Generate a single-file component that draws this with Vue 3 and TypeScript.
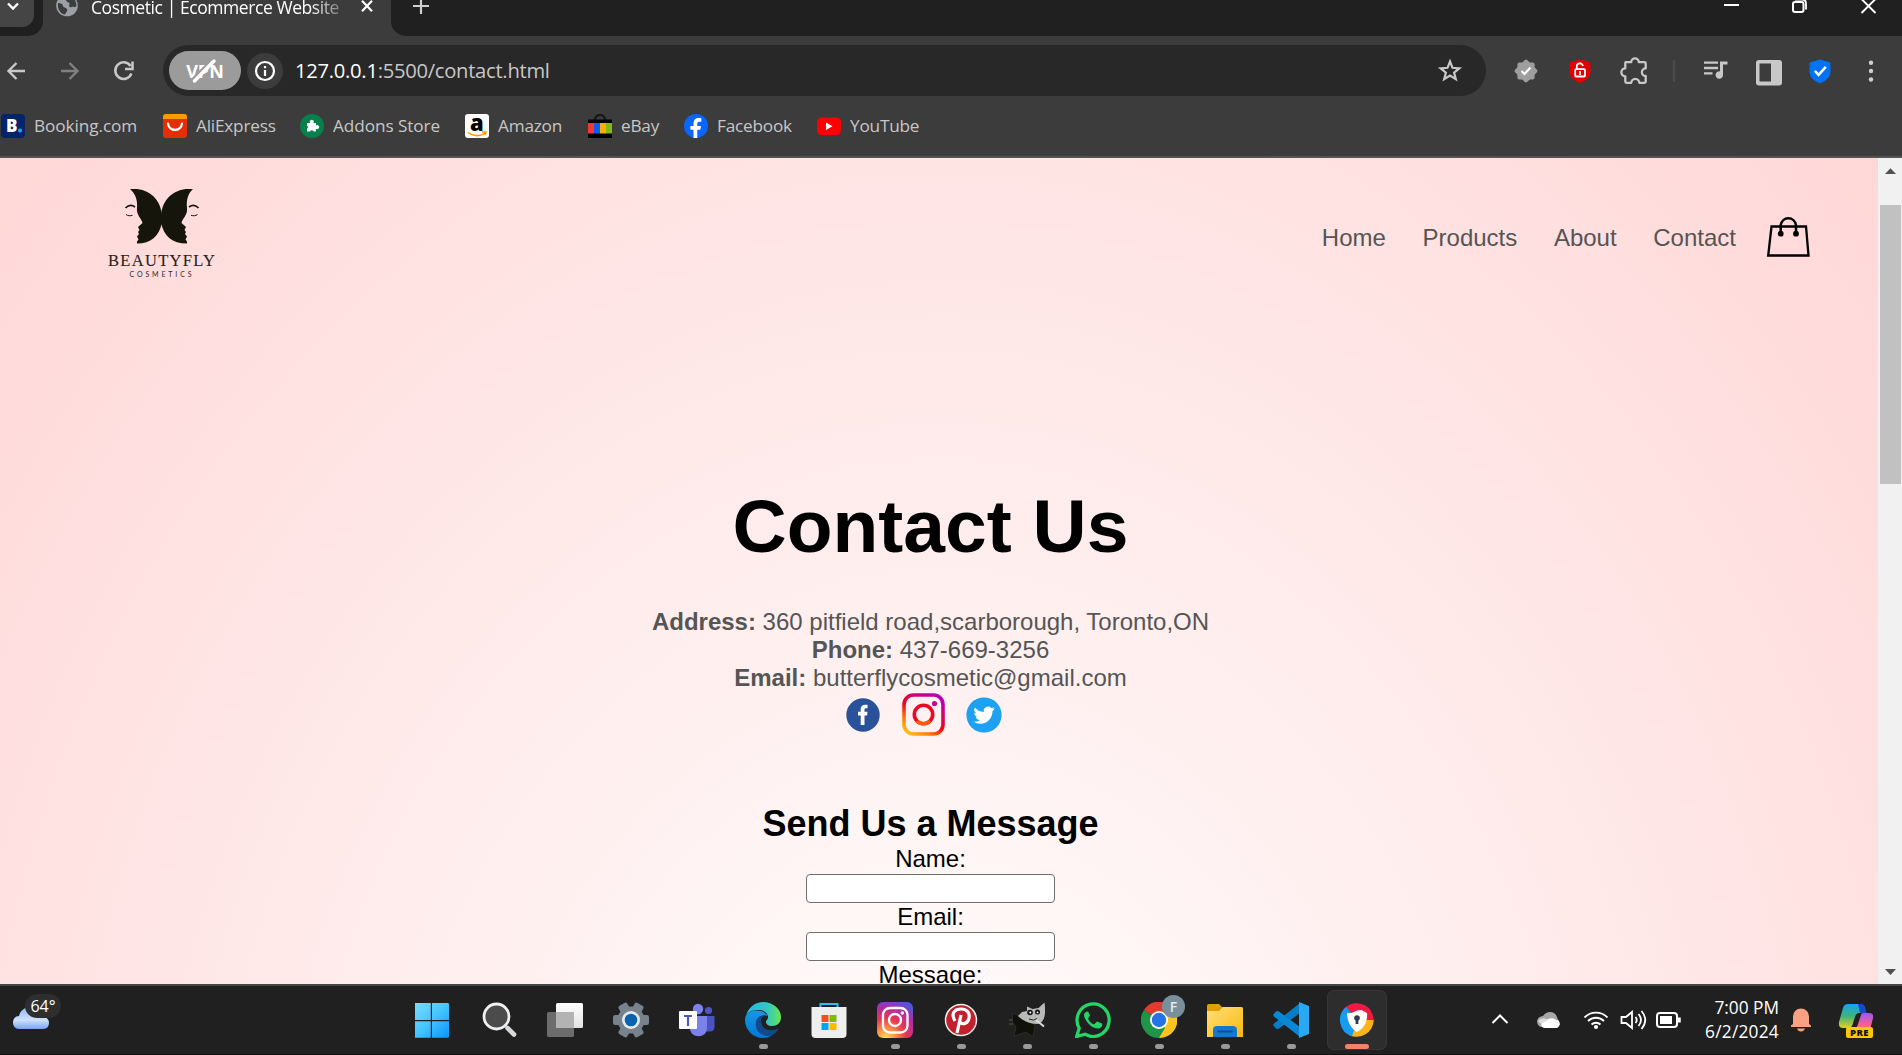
<script setup lang="ts">
interface Bookmark {
  id: string
  label: string
  width: number
}

interface TaskItem {
  id: string
  running?: boolean
  active?: boolean
}

const bookmarks: Bookmark[] = [
  { id: 'booking', label: 'Booking.com', width: 104 },
  { id: 'aliexpress', label: 'AliExpress', width: 79 },
  { id: 'addons', label: 'Addons Store', width: 107 },
  { id: 'amazon', label: 'Amazon', width: 65 },
  { id: 'ebay', label: 'eBay', width: 38 },
  { id: 'facebook', label: 'Facebook', width: 75 },
  { id: 'youtube', label: 'YouTube', width: 69 },
]

const links: string[] = ['Home', 'Products', 'About', 'Contact']

const tasks: TaskItem[] = [
  { id: 'start' },
  { id: 'search' },
  { id: 'taskview' },
  { id: 'settings' },
  { id: 'teams' },
  { id: 'edge', running: true },
  { id: 'store' },
  { id: 'instagram', running: true },
  { id: 'pinterest', running: true },
  { id: 'gimp', running: true },
  { id: 'whatsapp', running: true },
  { id: 'chrome', running: true },
  { id: 'explorer', running: true },
  { id: 'vscode', running: true },
  { id: 'secure', running: true, active: true },
]
</script>

<template>
  <div class="screen">
    <header class="browser">
      <div class="tabstrip">
        <div class="strip-left">
          <div class="tab-search">
            <svg width="34" height="27" viewBox="0 0 34 27"><path d="M8 3.500l5 5 5-5" fill="none" stroke="#fff" stroke-width="2.400" /></svg>
          </div>
        </div>
        <div class="tab">
          <svg class="globe" width="22" height="18" viewBox="0 0 22 18">
            <circle cx="11" cy="5.500" r="10.800" fill="#9aa0a6" />
            <path d="M2 3c3 0 5 1 5 3s3 1 4 3-1 3-2 5.500C5 14 2 10 2 6zM10 0h9c1 2 1.500 4 1.500 6-2 2-3 0-5 1s-3-1-2-3-3-1-3.500-4z" fill="#3c3c3c" />
          </svg>
          <span class="tab-title">Cosmetic | Ecommerce Website</span>
          <svg class="tab-close" width="14" height="14" viewBox="0 0 14 14"><path d="M2 .8l10 10.400M12 .8L2 11.200" stroke="#fff" stroke-width="2.200" /></svg>
        </div>
        <div class="strip-right">
          <svg class="new-tab" width="16" height="16" viewBox="0 0 16 16"><path d="M0 6h16M8-2v16" stroke="#cfcfcf" stroke-width="2.200" /></svg>
          <div class="window-buttons">
            <svg width="68" height="20" viewBox="0 0 68 20"><path d="M26 5h15" stroke="#fff" stroke-width="2" /></svg>
            <svg width="68" height="20" viewBox="0 0 68 20"><rect x="27" y="2" width="10.500" height="10" rx="2" fill="none" stroke="#fff" stroke-width="2" /><path d="M29-.5h7q4 0 4 4v6" fill="none" stroke="#fff" stroke-width="1.800" /></svg>
            <svg width="68" height="20" viewBox="0 0 68 20"><path d="M27.500-1l14 14M41.500-1l-14 14" stroke="#fff" stroke-width="1.900" /></svg>
          </div>
        </div>
      </div>

      <div class="toolbar">
        <div class="nav-buttons">
          <svg width="54" height="24" viewBox="0 0 54 24"><path d="M25 12H9M16.500 4L8.500 12l8 8" fill="none" stroke="#c8c8c8" stroke-width="2.400" /></svg>
          <svg width="54" height="24" viewBox="0 0 54 24"><path d="M7 12h16M15.500 4l8 8-8 8" fill="none" stroke="#808080" stroke-width="2.400" /></svg>
          <svg width="54" height="24" viewBox="0 0 54 24"><path d="M23.400 14.500A8.300 8.300 0 1 1 22.500 7M24.500 2.500V10H17" fill="none" stroke="#c8c8c8" stroke-width="2.500" /></svg>
        </div>
        <div class="omnibox">
          <div class="vpn">
            <span>VPN</span>
            <svg width="72" height="39" viewBox="0 0 72 39"><path d="M24 28L44 8" stroke="#9b9b9b" stroke-width="3" /><path d="M25.500 30L45 10" stroke="#fff" stroke-width="3.500" stroke-linecap="round" /></svg>
          </div>
          <div class="info">
            <svg width="22" height="22" viewBox="0 0 22 22"><circle cx="11" cy="11" r="9" fill="none" stroke="#fff" stroke-width="2.200" /><path d="M11 10v6M11 6v2.300" stroke="#fff" stroke-width="2.200" /></svg>
          </div>
          <span class="url"><b>127.0.0.1</b>:5500/contact.html</span>
          <svg class="star" width="26" height="26" viewBox="0 0 26 26"><path d="M13 3.500l2.500 6.300 6.800.5-5.200 4.300 1.700 6.600L13 17.600l-5.800 3.600 1.700-6.600-5.200-4.300 6.800-.5z" fill="none" stroke="#c8c8c8" stroke-width="2.200" /></svg>
        </div>
        <div class="extensions">
          <svg width="54" height="30" viewBox="0 0 54 30">
            <g fill="#9e9e9e"><rect x="18.400" y="6.400" width="17.200" height="17.200" rx="2" /><rect x="18.400" y="6.400" width="17.200" height="17.200" rx="2" transform="rotate(45 27 15)" /></g>
            <path d="M22.500 15l3 3 6-6.500" fill="none" stroke="#fff" stroke-width="2.200" />
          </svg>
          <svg width="54" height="30" viewBox="0 0 54 30">
            <path d="M27 3.500l10.500 3v9c0 6-5 9.500-10.500 11.500C21.500 25 16.500 21.500 16.500 15.500v-9z" fill="#e30000" />
            <rect x="22.200" y="13.200" width="9.800" height="7.300" rx="1" fill="none" stroke="#fff" stroke-width="1.800" />
            <path d="M23.800 13v-2a3.100 3.100 0 0 1 6.200-1M27 15v4" fill="none" stroke="#fff" stroke-width="1.700" />
          </svg>
          <svg width="54" height="30" viewBox="0 0 54 30">
            <path d="M18.500 6.200h5.700a3.800 3.800 0 0 1 7.600 0h5.700q1.200 0 1.200 1.200v5a3.800 3.800 0 0 0 0 7.600v5.600q0 1.200-1.200 1.200h-5.200a4 4 0 0 0-8 0h-4.800q-1.200 0-1.200-1.200v-5.300a3.800 3.800 0 0 1 0-7.900V7.400q0-1.200.2-1.200z" fill="none" stroke="#c8c8c8" stroke-width="2.300" stroke-linejoin="round" />
          </svg>
          <svg width="28" height="30" viewBox="0 0 28 30"><path d="M13 4v22" stroke="#4a4a4a" stroke-width="2.500" /></svg>
          <svg width="54" height="30" viewBox="0 0 54 30">
            <path d="M15 6.700h14M15 12h14M15 17.300h8.500" stroke="#c8c8c8" stroke-width="2.300" />
            <path d="M31 5.500h7.500v3H34V19a3.700 3.700 0 1 1-3-3.600z" fill="#c8c8c8" />
          </svg>
          <svg width="53" height="30" viewBox="0 0 53 30"><rect x="13" y="4" width="26" height="25.500" rx="3" fill="#c8c8c8" /><rect x="16.500" y="7.500" width="11.500" height="18" fill="#3c3c3c" /></svg>
          <svg width="50" height="30" viewBox="0 0 50 30"><path d="M24 3.500l10.500 3v9c0 6-5 9.500-10.500 12C18.500 25 13.500 21.500 13.500 15.500v-9z" fill="#0073f5" /><path d="M18.800 14.800l3.800 4 7.200-8" fill="none" stroke="#fff" stroke-width="2.500" /></svg>
          <svg width="50" height="30" viewBox="0 0 50 30" fill="#d0d0d0"><circle cx="25" cy="6.700" r="2.200" /><circle cx="25" cy="15" r="2.200" /><circle cx="25" cy="23.500" r="2.200" /></svg>
        </div>
      </div>

      <div class="bookmarks">
        <div v-for="item in bookmarks" :key="item.id" class="bookmark">
          <svg width="24" height="24" viewBox="0 0 24 24">
            <g v-if="item.id === 'booking'">
              <rect width="24" height="24" rx="4" fill="#04246a" />
              <text x="5" y="18" font-size="17" font-weight="800" font-family="Open Sans, sans-serif" fill="#fff">B</text>
              <circle cx="19" cy="16.500" r="2" fill="#2aa5e8" />
            </g>
            <g v-else-if="item.id === 'aliexpress'">
              <rect width="24" height="24" rx="3" fill="#e62e04" /><path d="M0 5V3q0-3 3-3h18q3 0 3 3v2z" fill="#ff9a00" />
              <path d="M5 9.500c1 8.500 13 8.500 14 0" fill="none" stroke="#fff" stroke-width="2.200" stroke-linecap="round" />
            </g>
            <g v-else-if="item.id === 'addons'">
              <circle cx="12" cy="12" r="12" fill="#08804c" />
              <path d="M7 9h3.200a2 2 0 1 1 3.200 0H16v2.600a2 2 0 1 1 0 3.200V17.500h-2.400a1.900 1.900 0 0 0-3.600 0H7v-2.800a1.800 1.800 0 0 0 0-3.200z" fill="#fff" />
            </g>
            <g v-else-if="item.id === 'amazon'">
              <rect width="24" height="24" rx="3" fill="#fff" />
              <text x="5" y="16.800" font-size="22" font-weight="800" font-family="Open Sans, sans-serif" fill="#000">a</text>
              <path d="M3 18.500c5 4 12 4 17 .8M17 18h4l-1 3" fill="none" stroke="#ff9900" stroke-width="1.600" />
            </g>
            <g v-else-if="item.id === 'ebay'">
              <path d="M6.500 7a5.500 6 0 0 1 11 0" fill="none" stroke="#151515" stroke-width="2.200" />
              <path d="M0 5.500h24V24H0z" fill="#000" />
              <path d="M0 9h6v10.500H0z" fill="#ff3434" /><path d="M6 9h6v10.500H6z" fill="#0a5df0" /><path d="M12 9h6v10.500h-6z" fill="#ffae00" /><path d="M18 9h6v10.500h-6z" fill="#84b817" />
            </g>
            <g v-else-if="item.id === 'facebook'">
              <circle cx="12" cy="12" r="12" fill="#0866ff" />
              <path d="M9.500 24v-8.200H6.400V12h3.100v-2.200c0-4 1.800-5.800 5.500-5.800.8 0 1.800.1 2.300.3v3.400h-1.700c-1.700 0-2.300.6-2.300 2.300v2h3.700l-.7 3.800h-3V24z" fill="#fff" />
            </g>
            <g v-else>
              <rect y="3.500" width="24" height="17.500" rx="4.500" fill="#f00" /><path d="M9 8.500l6.500 3.700L9 16z" fill="#fff" />
            </g>
          </svg>
          <span :class="item.id" :style="{ width: item.width + 'px' }">{{ item.label }}</span>
        </div>
      </div>
    </header>

    <div class="viewport">
      <main class="page">
        <nav class="navbar">
          <svg class="logo" width="120" height="120" viewBox="0 0 120 120">
            <g fill="#15150c">
              <path d="M30 11.300C47 9 61 20 62 38V45C59 58 51 65.500 37 65.500L37 63.500 38.500 61.500 37 58.500 39 56 38 54 39.500 52 38 49 42.500 45C42 41 36 37 37 30 38 21 34 14 30 11.300z" />
              <path d="M93 11.300C76 9 62 20 61 38V45C64 58 72 65.500 87 65.500L87 63.500 85.500 61.500 87 58.500 85 56 86 54 84.500 52 86 49 81.500 45C82 41 88 37 87 30 86 21 89 14 93 11.300z" />
            </g>
            <path d="M25.500 30c3-3 6-3.500 9.500-1M98.500 30c-3-3-6-3.500-9.500-1" fill="none" stroke="#15150c" stroke-width="1.700" />
            <path d="M26 36.500c2 1.500 4 1.500 6.500.8M97.500 36.500c-2 1.500-4 1.500-6.500.8" fill="none" stroke="#15150c" />
            <text x="8" y="88" font-family="Liberation Serif, serif" font-size="16.500" textLength="107" fill="#26231b" stroke="#26231b" stroke-width=".1">BEAUTYFLY</text>
            <text x="29.500" y="99.300" font-family="Lato, sans-serif" font-size="7" textLength="62" fill="#2d2922">COSMETICS</text>
          </svg>
          <ul>
            <li v-for="link in links" :key="link"><a>{{ link }}</a></li>
          </ul>
          <svg class="bag" width="45" height="45" viewBox="0 0 45 45">
            <path d="M5.500 13.500H40L42.500 42.500H2.200z" fill="none" stroke="#000" stroke-width="2.300" />
            <path d="M14.700 20V12a7.800 8.500 0 0 1 15.300 0v8" fill="none" stroke="#000" stroke-width="2.500" />
            <circle cx="14.700" cy="20.700" r="2.900" /><circle cx="30" cy="20.700" r="2.900" />
          </svg>
        </nav>

        <section class="contact">
          <h1>Contact Us</h1>
          <p><strong>Address:</strong> 360 pitfield road,scarborough, Toronto,ON</p>
          <p><strong>Phone:</strong> 437-669-3256</p>
          <p><strong>Email:</strong> butterflycosmetic@gmail.com</p>
          <div class="social">
            <svg width="34" height="34" viewBox="0 0 34 34"><circle cx="17" cy="17" r="16.700" fill="#29529b" /><path d="M14.700 27V17.600H12V13.800h2.700v-2.500c0-3 1.600-4.600 4.400-4.600h2.400v3.600h-1.700c-1.100 0-1.300.5-1.300 1.500v2h3l-.4 3.800h-2.600V27z" fill="#fff" /></svg>
            <svg width="43" height="43" viewBox="0 0 43 43">
              <defs>
                <linearGradient id="ig" x1=".1" y1="1" x2=".75" y2="0"><stop offset="0" stop-color="#ffc414" /><stop offset=".25" stop-color="#ff7a0a" /><stop offset=".5" stop-color="#f3001c" /><stop offset="1" stop-color="#b900b4" /></linearGradient>
              </defs>
              <rect x="2" y="2" width="39" height="39" rx="9.500" fill="none" stroke="url(#ig)" stroke-width="3.600" />
              <circle cx="21.500" cy="21.500" r="9.200" fill="none" stroke="#ee0825" stroke-width="3.600" /><circle cx="32.500" cy="10.500" r="2.600" fill="#c80083" />
              <path d="M15 28a9.200 9.200 0 0 0 13 0" fill="none" stroke="#ff5a0a" stroke-width="3.600" />
            </svg>
            <svg width="36" height="36" viewBox="0 0 36 36"><circle cx="18" cy="18" r="17.600" fill="#1da1f2" /><path transform="translate(7.500 7.600) scale(.88)" d="M23.950 4.570a10 10 0 0 1-2.820.78 4.960 4.960 0 0 0 2.160-2.730c-.95.560-2 .960-3.130 1.190a4.920 4.920 0 0 0-8.380 4.480C7.690 8.100 4.070 6.130 1.640 3.160a4.920 4.920 0 0 0 1.520 6.570 4.900 4.900 0 0 1-2.230-.61v.06a4.920 4.920 0 0 0 3.950 4.830 5 5 0 0 1-2.210.08 4.940 4.940 0 0 0 4.600 3.420A9.870 9.870 0 0 1 0 19.540a13.990 13.990 0 0 0 7.550 2.210c9.050 0 14-7.500 14-13.980 0-.21 0-.42-.02-.63a9.940 9.940 0 0 0 2.460-2.550z" fill="#fff" /></svg>
          </div>
        </section>

        <form class="message" @submit.prevent>
          <h2>Send Us a Message</h2>
          <label for="name">Name:</label>
          <input id="name" type="text" />
          <label for="email">Email:</label>
          <input id="email" type="email" />
          <label>Message:</label>
        </form>
      </main>
      <div class="scrollbar">
        <svg width="24" height="47" viewBox="0 0 24 47"><path d="M7 16l5.500-5.800L18 16z" fill="#505050" /></svg>
        <div class="thumb"></div>
        <svg class="down" width="24" height="24" viewBox="0 0 24 24"><path d="M7 9h11l-5.500 6z" fill="#505050" /></svg>
      </div>
    </div>

    <footer class="taskbar">
      <div class="weather">
        <svg width="38" height="24" viewBox="0 0 38 24">
          <defs><linearGradient id="cloud" x2="0" y2="1"><stop offset="0" stop-color="#8db6f5" /><stop offset=".6" stop-color="#cfe0fa" /><stop offset="1" stop-color="#79a5ef" /></linearGradient></defs>
          <path d="M7 9C8 4 12 0 19 0c9 0 11 6 11 10h1c8 0 8 12 0 12H7C-1 22-1 9 7 9z" fill="url(#cloud)" />
        </svg>
        <span>64°</span>
      </div>

      <div class="tasks">
        <div v-for="task in tasks" :key="task.id" class="task" :class="{ running: task.running, active: task.active }">
          <svg width="36" height="36" viewBox="0 0 36 36">
            <g v-if="task.id === 'start'" transform="translate(-1.700 0)">
              <defs><linearGradient id="win" x2="1" y2="1"><stop offset="0" stop-color="#7bdcff" /><stop offset=".5" stop-color="#45c5fd" /><stop offset="1" stop-color="#0a93fb" /></linearGradient></defs>
              <path d="M2 1h15.500v17H.7V2.200Q.7 1 2 1zM18.700 1h15.600q1.400 0 1.400 1.300V18h-17zM.7 19.200h16.800v16.500H2Q.7 35.700.7 34.500zM18.700 19.200h17v15.300q0 1.200-1.400 1.200H18.700z" fill="url(#win)" />
            </g>
            <g v-else-if="task.id === 'search'" transform="translate(1.500 0)">
              <path d="M25 26l6.500 6.500" stroke="#d5d9dc" stroke-width="4.600" stroke-linecap="round" />
              <circle cx="14" cy="14.500" r="12.500" fill="#4b4b4b" stroke="#eef0f1" stroke-width="2.800" />
            </g>
            <g v-else-if="task.id === 'taskview'">
              <defs><linearGradient id="tv" x2="0" y2="1"><stop offset="0" stop-color="#fff" /><stop offset="1" stop-color="#e2e2e2" /></linearGradient></defs>
              <rect x="9" y="1" width="27" height="25" rx="1.500" fill="url(#tv)" />
              <rect x="0" y="10" width="27" height="25" rx="1.500" fill="#6c6c6c" /><rect x="9" y="10" width="18" height="16" fill="#b3b3b3" />
            </g>
            <g v-else-if="task.id === 'settings'">
              <g fill="#77828c">
                <circle cx="18" cy="18" r="13.500" />
                <rect v-for="angle in [30, 90, 150, 210, 270, 330]" :key="angle" x="13" y="0" width="10" height="12" rx="2.200" :transform="`rotate(${angle} 18 18)`" />
              </g>
              <circle cx="18" cy="18" r="9" fill="#e6e9ec" /><circle cx="18" cy="18" r="6.300" fill="#0a62b0" />
            </g>
            <g v-else-if="task.id === 'teams'">
              <circle cx="29.500" cy="8.500" r="3.600" fill="#4f57c8" /><path d="M25 14h10.500v11q0 4.500-5 4.500H25z" fill="#4a52c4" />
              <circle cx="19" cy="7" r="5.200" fill="#7b83eb" /><path d="M11 14h17v12c0 11-17 11-17 0z" fill="#7b83eb" />
              <rect x="0" y="9" width="18" height="18" rx="1" fill="#fff" />
              <path d="M5 14h8M9 14v10" stroke="#4e56c0" stroke-width="2.200" />
            </g>
            <g v-else-if="task.id === 'edge'">
              <defs>
                <linearGradient id="edge-a" x2="1"><stop offset="0" stop-color="#29b5ee" /><stop offset=".6" stop-color="#30c5c5" /><stop offset="1" stop-color="#69e84e" /></linearGradient>
                <linearGradient id="edge-b" x2="0" y2="1"><stop offset="0" stop-color="#1798df" /><stop offset="1" stop-color="#0078d8" /></linearGradient>
              </defs>
              <path d="M1 13C5 3 12 0 18 0c10 0 18 7 18 15 0 6-4 9-9 9-4 0-6-2-6-4s2-2 2-5c0-4-4-7-9-7S4 9 1 13z" fill="url(#edge-a)" />
              <path d="M0 18c0-7 6-9.500 12-9.500S22 12 22.500 14c-5-2-9 1-9.500 6-.5 8 7 13 15 12-3 3-7 4-10 4C8 36 0 28 0 18z" fill="url(#edge-b)" />
              <path d="M17 13.500c-5 1-7 5-6 11C12 31 18 34 24 34c5-1 8-4 10-8-9 5-18 1-18-7 0-3 1-4 3-5z" fill="#114a8c" />
            </g>
            <g v-else-if="task.id === 'store'">
              <path d="M9.500 6V2h17v4" fill="none" stroke="#33bbf2" stroke-width="2" />
              <path d="M.5 5h35v27q0 4-4 4h-27q-4 0-4-4z" fill="#eeeeee" />
              <path d="M10.500 13h7v7h-7z" fill="#f25022" /><path d="M18.500 13h7v7h-7z" fill="#7fba00" /><path d="M10.500 21h7v7h-7z" fill="#00a4ef" /><path d="M18.500 21h7v7h-7z" fill="#ffb900" />
            </g>
            <g v-else-if="task.id === 'instagram'">
              <defs>
                <radialGradient id="insta" cx=".25" cy="1" r="1.100"><stop offset="0" stop-color="#ffdc62" /><stop offset=".22" stop-color="#fb9a45" /><stop offset=".5" stop-color="#e8374f" /><stop offset=".78" stop-color="#b12ca9" /><stop offset="1" stop-color="#5355d8" /></radialGradient>
              </defs>
              <rect width="36" height="36" rx="6" fill="url(#insta)" />
              <g fill="none" stroke="#fff" stroke-width="2.300"><rect x="6" y="6" width="24.500" height="24.500" rx="7" /><circle cx="18" cy="18" r="6" /></g><circle cx="25.300" cy="11" r="1.700" fill="#fff" />
            </g>
            <g v-else-if="task.id === 'pinterest'">
              <circle cx="18" cy="18" r="15.500" fill="#c1202c" stroke="#eef0ee" stroke-width="1.500" />
              <path d="M12 19c-5-9 1-12 6-12 7 0 9 5 8 9-1 6-7 7-9 4M18 13l-4 18" fill="none" stroke="#fff" stroke-width="3.200" />
            </g>
            <g v-else-if="task.id === 'gimp'">
              <path d="M4 11l12 6 10 6-2 12-7-5-12 4 2-9-4-6z" fill="#10110b" stroke="#343529" stroke-width=".7" />
              <path d="M35.500.500C37 12 36 21 28 22 20 22 13 18 9 14l4-4 5-1V4.500L23.500 7l6-1z" fill="#b8bab8" />
              <circle cx="21" cy="10.500" r="2.800" fill="#151515" /><circle cx="28.500" cy="10" r="2.500" fill="#151515" /><circle cx="21.300" cy="10.500" r="1" fill="#fff" /><circle cx="28.500" cy="10.300" r=".9" fill="#fff" />
              <path d="M20 17q5 2.500 8-.5" stroke="#222" fill="none" /><path d="M27 18l8 6.500" stroke="#ddd" stroke-width="2" /><path d="M0 18h4M0 22h4" stroke="#555" />
            </g>
            <g v-else-if="task.id === 'whatsapp'">
              <path d="M1.700 34.500l2.500-8.300A16 16.300 0 1 1 10 32.200z" fill="none" stroke="#25d366" stroke-width="3.300" />
              <path d="M13 9.500c-4 0-5 4-3 7 3 6 8 10 13 10 3 0 5-3 4-5l-5-2-3 3c-3-1-5-4-6-6l2-3z" fill="#25d366" />
            </g>
            <g v-else-if="task.id === 'chrome'">
              <path d="M18 18L3 8A18 18 0 0 1 34.500 10z" fill="#e33b2e" /><path d="M18 18l16.500-8A18 18 0 0 1 18 36z" fill="#fcc31e" /><path d="M18 18l6 8-6 10A18 18 0 0 1 3 8z" fill="#209447" />
              <circle cx="18" cy="18" r="9" fill="#fff" /><circle cx="18" cy="18" r="7.200" fill="#2673e8" />
            </g>
            <g v-else-if="task.id === 'explorer'">
              <defs><linearGradient id="folder" x2="1" y2="1"><stop offset="0" stop-color="#ffe07a" /><stop offset="1" stop-color="#fbb80e" /></linearGradient></defs>
              <path d="M0 4q0-2 2-2h10l3 3h19q2 0 2 2v8H0z" fill="#dfa000" /><path d="M0 9h12l4-4h18q2 0 2 2v28H0z" fill="url(#folder)" />
              <path d="M6 35v-7q0-4 4-4h16q4 0 4 4v7z" fill="#1479ca" /><path d="M11 29.500h14" stroke="#07509a" stroke-width="1.800" stroke-linecap="round" />
            </g>
            <g v-else-if="task.id === 'vscode'">
              <path d="M27 1v10L6 26.500q-1.500 1-3 0L.7 24q-1-1.200.3-2.500z" fill="#087cc5" /><path d="M27 35V25L6 9.500q-1.500-1-3 0L.7 12q-1 1.200.3 2.500z" fill="#0a88d4" /><path d="M26 0l10 4v28l-10 4z" fill="#29a9f3" />
            </g>
            <g v-else>
              <path d="M18 18L4 8A17 17 0 0 1 32 9z" fill="#ef1945" /><path d="M18 18L8 5A17 17 0 0 1 34.700 18L30 28z" fill="#ef1b45" /><path d="M18 18h16.700A17 17 0 0 1 10 33z" fill="#fbb51a" /><path d="M18 18l-5 16.200A17 17 0 0 1 7 5z" fill="#159df5" />
              <path d="M8 11c6 1 9-3 13-3 3 0 4 2 7 3 1 8-3 16-10 19C12 27 8 19 8 11z" fill="#fff" />
              <circle cx="18" cy="16" r="2.800" fill="#303b4d" /><path d="M18 17v5" stroke="#303b4d" stroke-width="2.800" />
            </g>
          </svg>
          <span v-if="task.id === 'chrome'" class="profile">F</span>
        </div>
      </div>

      <div class="tray">
        <svg width="36" height="24" viewBox="0 0 36 24"><path d="M10.500 15l7.500-7.500 7.500 7.500" fill="none" stroke="#fff" stroke-width="2" /></svg>
        <svg class="onedrive" width="36" height="24" viewBox="0 0 36 24"><path d="M11 19c-5-1-6-10 2-11C17 2 25 3 27 9l3 8z" fill="#a7a7a7" /><path d="M15 20c-5 0-5-6 0-7 3-3 8-4 11-1 5-1 5 8 0 8z" fill="#fff" /><path d="M8 13q4-5 10-1l-7 4z" fill="#dcdcdc" /></svg>
        <svg width="60" height="24" viewBox="0 0 60 24"><g fill="none" stroke="#fff" stroke-width="1.900"><path d="M18.500 9.500a16 16 0 0 1 23 0M22 13a11.500 11.500 0 0 1 16 0M25.500 16.500a6.500 6.500 0 0 1 9 0" /></g><circle cx="30" cy="19" r="2.100" fill="#fff" /></svg>
        <svg class="volume" width="36" height="24" viewBox="0 0 36 24"><g transform="translate(14 0)" fill="none" stroke="#fff" stroke-width="1.800"><path d="M-6.500 9H-2L4 4v16l-6-5h-4.500zM7.500 9q2.500 3 0 6M10.500 6q5 6 0 12M13.500 3q7.500 9 0 18" /></g></svg>
        <svg width="36" height="24" viewBox="0 0 36 24"><rect x="7" y="5" width="20" height="14" rx="3" fill="none" stroke="#fff" stroke-width="2" /><rect x="10" y="8" width="12" height="8" fill="#fff" /><path d="M29 9.500v5" stroke="#fff" stroke-width="3.500" /></svg>
        <div class="clock"><span>7:00 PM</span><span class="date">6/2/2024</span></div>
        <svg class="bell" width="22" height="24" viewBox="0 0 22 24"><path d="M1 17.500l2-1.500V8.500a8 8 0 0 1 16 0V16l2 1.500V19H1zM7 20.500h8q-1 3-4 3t-4-3z" fill="#fba183" /></svg>
        <div class="copilot">
          <svg width="36" height="32" viewBox="0 0 36 32">
            <defs>
              <linearGradient id="cp-a" x2="0" y2="1"><stop offset="0" stop-color="#17a4ef" /><stop offset=".5" stop-color="#3bb37e" /><stop offset="1" stop-color="#eacd22" /></linearGradient>
              <linearGradient id="cp-b" x2="0" y2="1"><stop offset="0" stop-color="#9859f2" /><stop offset=".6" stop-color="#f05e9f" /><stop offset="1" stop-color="#fa7756" /></linearGradient>
            </defs>
            <path d="M10 0h12q4 0 5 4l1 5h-7q-3 0-4 4l-3 9q-1 2-4 2H5q-5 0-4-6L5 4q1-4 5-4z" fill="url(#cp-a)" />
            <path d="M20 0h3q3 0 4 4l1.500 5H22z" fill="#1549c5" />
            <path d="M25 9h6q5 0 4 5l-3 12H10l4-2h2q3 0 4-4l3-9q0-2 2-2z" fill="url(#cp-b)" />
          </svg>
          <span>PRE</span>
        </div>
      </div>
    </footer>
  </div>
</template>

<style>
body {
  margin: 0;
  overflow: hidden;
}
</style>

<style scoped>
.screen {
  display: flex;
  flex-direction: column;
  width: 1902px;
  height: 1055px;
  overflow: hidden;
  font-family: "Open Sans", "Noto Sans", sans-serif;
}
svg {
  display: block;
  flex: none;
}
span {
  white-space: nowrap;
}

.browser {
  box-sizing: border-box;
  height: 158px;
  background: #3c3c3c;
  border-bottom: 2px solid #545454;
}
.tabstrip {
  display: flex;
  height: 36px;
}
.strip-left {
  width: 43px;
  background: #202020;
  border-bottom-right-radius: 15px;
}
.tab-search {
  width: 34px;
  height: 27px;
  background: #454545;
  border-bottom-right-radius: 12px;
}
.tab {
  display: flex;
  align-items: flex-start;
  width: 348px;
}
.globe {
  margin-left: 13px;
}
.tab-title {
  width: 250px;
  margin: -6px 0 0 13px;
  font-size: 17.5px;
  line-height: 27px;
  letter-spacing: -0.43px;
  color: #fff;
  mask-image: linear-gradient(90deg, #000 218px, rgba(0, 0, 0, 0.3) 250px);
}
.tab-close {
  margin-left: 19px;
}
.strip-right {
  display: flex;
  flex: 1;
  justify-content: space-between;
  background: #202020;
  border-bottom-left-radius: 15px;
}
.new-tab {
  margin-left: 22px;
}
.window-buttons {
  display: flex;
}

.toolbar {
  display: flex;
  height: 51px;
  padding-top: 9px;
}
.nav-buttons {
  display: flex;
  align-items: center;
  width: 163px;
}
.omnibox {
  display: flex;
  align-items: center;
  width: 1323px;
  background: #282828;
  border-radius: 26px;
}
.vpn {
  position: relative;
  width: 72px;
  height: 39px;
  margin-left: 6px;
  background: #9b9b9b;
  border-radius: 20px;
}
.vpn span {
  display: block;
  font-size: 18px;
  font-weight: 700;
  line-height: 40px;
  color: #fff;
  text-align: center;
}
.vpn svg {
  position: absolute;
  top: 0;
  left: 0;
}
.info {
  display: grid;
  place-items: center;
  width: 36px;
  height: 36px;
  margin-left: 6px;
  background: #3c3c3c;
  border-radius: 50%;
}
.url {
  margin: -1px 0 0 12px;
  font-size: 20.2px;
  letter-spacing: -0.28px;
  color: #c7c7c7;
}
.url b {
  font-weight: 400;
  color: #fff;
}
.star {
  margin: 0 23px 0 auto;
}
.extensions {
  display: flex;
  align-items: center;
  padding-left: 12.5px;
}

.bookmarks {
  display: flex;
  gap: 25px;
  align-items: center;
  height: 60px;
  padding-left: 1px;
}
.bookmark {
  display: flex;
  gap: 9px;
  align-items: center;
}
.bookmark span {
  font-size: 17.2px;
  line-height: 24px;
  letter-spacing: -0.2px;
  color: #c7c7c7;
}
.bookmark .booking,
.bookmark .addons {
  letter-spacing: -0.08px;
}

.viewport {
  display: flex;
  height: 826px;
  overflow: hidden;
}
.page {
  width: 1878px;
  font-family: "Liberation Sans", Arial, sans-serif;
  font-size: 24px;
  line-height: 28px;
  color: #000;
  background: radial-gradient(#fff, #ffd6d6) 0 -68px / 100% 2303px no-repeat;
}
.navbar {
  display: flex;
  align-items: center;
  height: 160px;
  padding: 0 67px 0 100px;
}
.navbar ul {
  display: flex;
  gap: 36.67px;
  padding: 0;
  margin: 0 30px 0 auto;
  list-style: none;
}
.navbar a,
.contact p {
  color: #555;
}
.bag {
  margin-top: -5px;
}
.contact,
.message {
  display: flex;
  flex-direction: column;
  align-items: center;
  padding-right: 17px;
}
h1 {
  margin: 165px 0 39px;
  font-size: 75px;
  line-height: 86px;
}
.contact p {
  margin: 0;
}
.social {
  display: flex;
  gap: 21.5px;
  align-items: center;
  height: 45px;
  padding-right: 13px;
}
.message {
  margin-top: 66px;
}
h2 {
  margin: 0;
  font-size: 36px;
  line-height: 42px;
}
label {
  height: 29px;
}
input {
  box-sizing: border-box;
  width: 249px;
  height: 29px;
  padding: 0;
  background: #fff;
  border: 1px solid #6f6f6f;
  border-radius: 4px;
}

.scrollbar {
  display: flex;
  flex-direction: column;
  width: 24px;
  background: #f1f1f1;
}
.thumb {
  width: 21px;
  height: 279px;
  margin-left: 2px;
  background: #c1c1c1;
}
.down {
  margin-top: auto;
}

.taskbar {
  box-sizing: border-box;
  display: flex;
  height: 71px;
  background: #202020;
  border-top: 2px solid #454545;
  border-bottom: 1px solid #111;
}
.weather {
  position: relative;
  width: 400px;
}
.weather svg {
  margin: 21px 0 0 12px;
}
.weather span {
  position: absolute;
  top: 8px;
  left: 25px;
  width: 36px;
  height: 24px;
  font-size: 16px;
  line-height: 24px;
  color: #fff;
  text-align: center;
  background: #2e2e2e;
  border-radius: 12px;
}
.tasks {
  display: flex;
}
.task {
  position: relative;
  box-sizing: border-box;
  width: 60px;
  height: 60px;
  padding: 12px 12px 0;
  margin: 4px 3px 0;
}
.task.active {
  background: #2d2d2d;
  border-radius: 7px;
  box-shadow: inset 0 0 0 1px #363636;
}
.task.running::after {
  position: absolute;
  bottom: 1px;
  left: 25.5px;
  width: 9px;
  height: 5px;
  content: "";
  background: #999;
  border-radius: 3px;
}
.task.active::after {
  left: 18px;
  width: 24px;
  background: #f58265;
}
.profile {
  position: absolute;
  top: 5px;
  left: 33px;
  width: 23px;
  height: 23px;
  font-size: 14px;
  font-weight: 600;
  line-height: 23px;
  color: #e4eaec;
  text-align: center;
  background: #78909c;
  border-radius: 50%;
}
.tray {
  display: flex;
  align-items: flex-start;
  padding-left: 92px;
}
.tray > svg {
  margin-top: 22px;
}
.tray > .onedrive {
  margin-left: 12px;
}
.tray > .volume {
  margin-left: -12px;
}
.clock {
  display: flex;
  flex-direction: column;
  align-items: flex-end;
  width: 93px;
  margin-top: 10px;
  font-size: 17.3px;
  line-height: 24px;
  color: #fff;
}
.date {
  letter-spacing: 0.25px;
}
.bell {
  margin-left: 11px;
}
.copilot {
  position: relative;
  margin: 18px 0 0 26px;
}
.copilot span {
  position: absolute;
  top: 23px;
  left: 8px;
  width: 27px;
  height: 11px;
  font-size: 9.5px;
  font-weight: 800;
  line-height: 11px;
  color: #111;
  text-align: center;
  letter-spacing: 0.4px;
  background: #ffc800;
  border-radius: 2px;
}
</style>
